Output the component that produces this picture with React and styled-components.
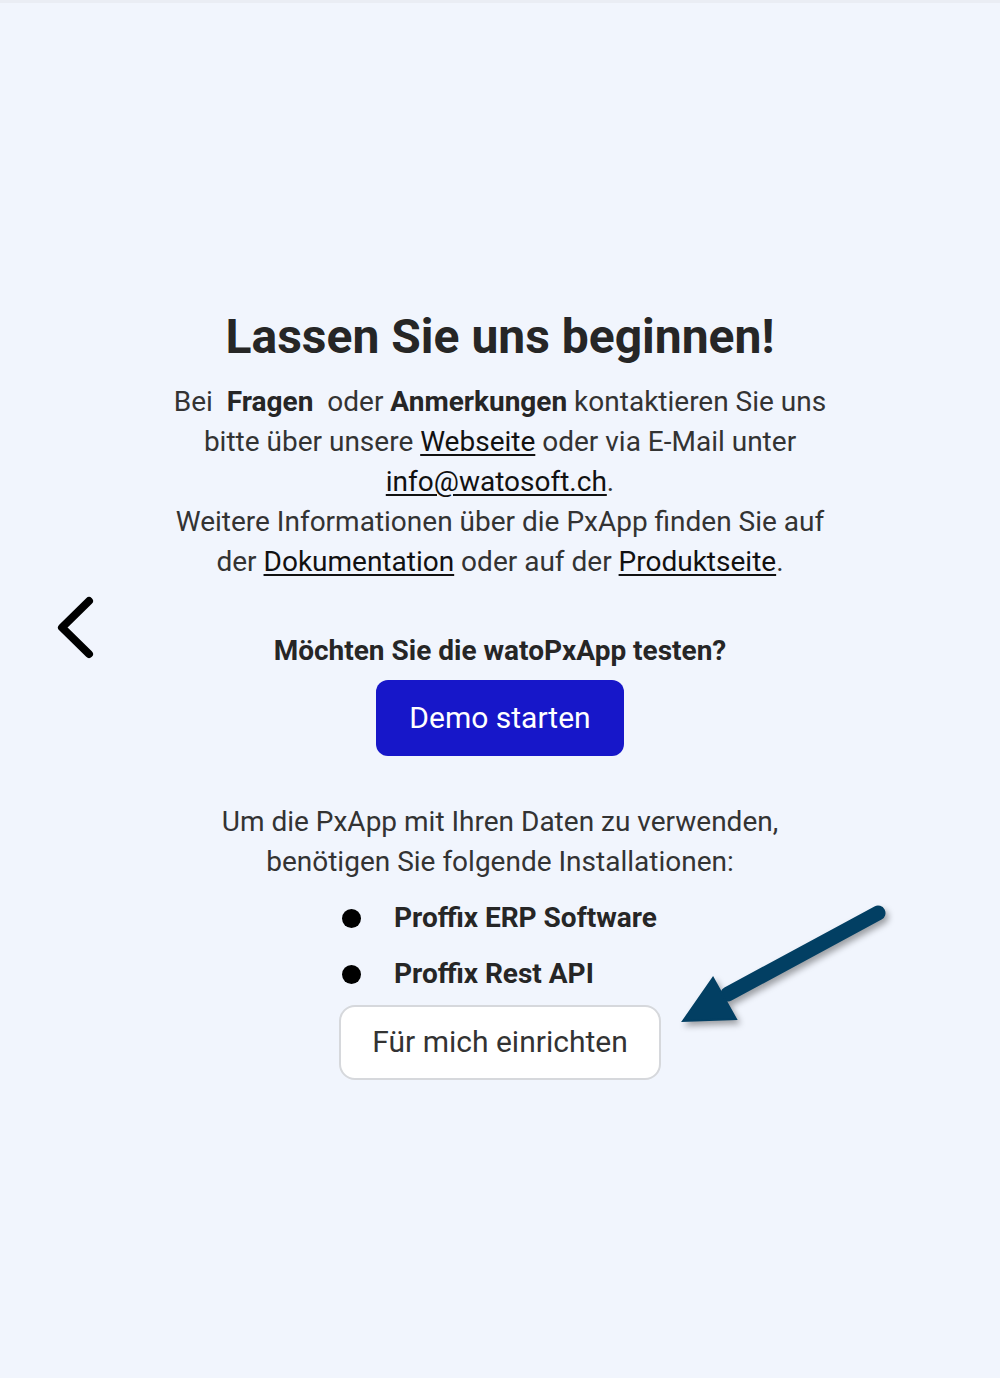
import React from "react";
import styled, { createGlobalStyle } from "styled-components";

const GlobalStyle = createGlobalStyle`
    html, body {
        margin: 0;
        padding: 0;
        background: #f1f5fd;
    }
    body {
        font-family: Roboto, "Liberation Sans", sans-serif;
        color: #333333;
    }
`;

const Page = styled.div`
    position: relative;
    min-height: 1378px;
    box-sizing: border-box;
    border-top: 3px solid #eaedf4;
    display: flex;
    flex-direction: column;
    align-items: center;
    padding-top: 306px;
`;

const NavButton = styled.button`
    position: absolute;
    left: 52px;
    top: 589px;
    width: 48px;
    height: 72px;
    padding: 0;
    border: none;
    background: transparent;
    cursor: pointer;
    display: flex;
`;

const Slide = styled.div`
    display: flex;
    flex-direction: column;
    align-items: center;
    text-align: center;
`;

const Title = styled.h1`
    margin: 0;
    font-size: 48px;
    font-weight: 700;
    line-height: 56px;
    color: #262626;
`;

const Text = styled.p`
    margin: ${(p) => p.$mt || 0}px 0 0;
    max-width: ${(p) => p.$width || 680}px;
    font-size: 28px;
    line-height: 40px;
    font-weight: 400;
    color: #333333;

    b {
        font-weight: 700;
        color: #262626;
    }
`;

const Link = styled.a`
    color: #111111;
    text-decoration: underline;
    text-underline-offset: 3px;
    text-decoration-thickness: 2px;
`;

const Question = styled.h3`
    margin: 53px 0 0;
    font-size: 28px;
    line-height: 32px;
    font-weight: 700;
    color: #262626;
`;

const PrimaryButton = styled.button`
    margin-top: 13px;
    width: 248px;
    height: 76px;
    padding: 0 0 2px;
    border: none;
    border-radius: 12px;
    background: #1717c9;
    color: #ffffff;
    font-family: inherit;
    font-size: 30px;
    font-weight: 400;
    cursor: pointer;
`;

const List = styled.ul`
    list-style: none;
    margin: 16px 0 0;
    padding: 0;
    display: flex;
    flex-direction: column;
    gap: 16px;
    width: 316px;
    text-align: left;
`;

const Item = styled.li`
    display: flex;
    align-items: center;
    gap: 33px;
    font-size: 28px;
    line-height: 40px;
    font-weight: 700;
    color: #262626;

    &::before {
        content: "";
        width: 19px;
        height: 19px;
        border-radius: 50%;
        background: #000000;
        flex-shrink: 0;
    }
`;

const ActionWrap = styled.div`
    position: relative;
    margin-top: 11px;
`;

const SecondaryButton = styled.button`
    width: 322px;
    height: 75px;
    padding: 0 0 2px;
    box-sizing: border-box;
    border: 2px solid #d6d8dc;
    border-radius: 16px;
    background: #ffffff;
    color: #333333;
    font-family: inherit;
    font-size: 30px;
    font-weight: 400;
    cursor: pointer;
`;

const Pointer = styled.svg`
    position: absolute;
    left: calc(100% + 9px);
    top: -115px;
    width: 230px;
    height: 150px;
    filter: drop-shadow(3px 4px 3px rgba(0, 0, 0, 0.35));
`;

function ChevronLeft() {
    return (
        <svg width="48" height="72" viewBox="0 0 48 72" fill="none">
            <path d="M37 9 L10 35.5 L37 62" stroke="#000" strokeWidth="8" strokeLinecap="round" strokeLinejoin="round" />
        </svg>
    );
}

export default function App() {
    return (
        <>
            <GlobalStyle />
            <Page>
                <NavButton aria-label="Zurück">
                    <ChevronLeft />
                </NavButton>
                <Slide>
                    <Title>Lassen Sie uns beginnen!</Title>
                    <Text $mt={17}>
                        Bei&nbsp; <b>Fragen</b>&nbsp; oder <b>Anmerkungen</b> kontaktieren Sie uns bitte über unsere{" "}
                        <Link href="#">Webseite</Link> oder via E-Mail unter <Link href="#">info@watosoft.ch</Link>.
                        <br />
                        Weitere Informationen über die PxApp finden Sie auf der <Link href="#">Dokumentation</Link> oder auf der{" "}
                        <Link href="#">Produktseite</Link>.
                    </Text>
                    <Question>Möchten Sie die watoPxApp testen?</Question>
                    <PrimaryButton>Demo starten</PrimaryButton>
                    <Text $mt={46}>
                        Um die PxApp mit Ihren Daten zu verwenden,
                        <br />
                        benötigen Sie folgende Installationen:
                    </Text>
                    <List>
                        <Item>Proffix ERP Software</Item>
                        <Item>Proffix Rest API</Item>
                    </List>
                    <ActionWrap>
                        <SecondaryButton>Für mich einrichten</SecondaryButton>
                        <Pointer viewBox="0 0 230 150">
                            <path d="M208 23 L58 104" stroke="#023f63" strokeWidth="15" strokeLinecap="round" />
                            <path d="M13 131 L43 88 L66 129 Z" fill="#023f63" stroke="#023f63" strokeWidth="2" strokeLinejoin="miter" />
                        </Pointer>
                    </ActionWrap>
                </Slide>
            </Page>
        </>
    );
}
